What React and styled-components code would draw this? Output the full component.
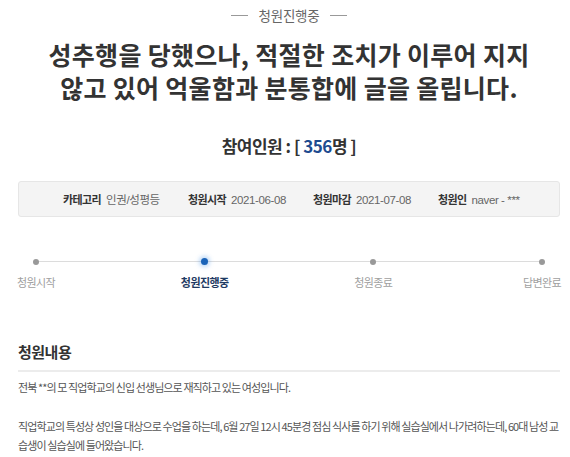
import React from "react";
import styled, { createGlobalStyle } from "styled-components";

const Global = createGlobalStyle`
  html, body { margin: 0; padding: 0; background: #fff; }
  body { font-family: "Noto Sans CJK KR", "Noto Sans", sans-serif; color: #333; }
`;

const Page = styled.div`
  width: 542px;
  padding: 7px 10px 0 18px;
`;

const Status = styled.div`
  display: flex;
  align-items: center;
  justify-content: center;
  gap: 10px;
  font-size: 13.5px;
  line-height: 16px;
  color: #666;
  letter-spacing: -0.2px;
  &::before, &::after {
    content: "";
    width: 17px;
    height: 1px;
    background: #999;
  }
`;

const Title = styled.h1`
  margin: 15px 0 0;
  text-align: center;
  font-size: 25px;
  line-height: 33px;
  font-weight: 700;
  color: #333;
  letter-spacing: 0.3px;
`;

const Count = styled.div`
  margin-top: 31px;
  text-align: center;
  font-size: 17px;
  line-height: 22px;
  font-weight: 700;
  color: #333;
  letter-spacing: -0.5px;
`;

const Num = styled.span`
  color: #1d4b8f;
`;

const InfoBox = styled.div`
  margin-top: 24px;
  height: 34px;
  background: #f4f4f4;
  border: 1px solid #e6e6e6;
  border-radius: 3px;
  display: grid;
  grid-template-columns: repeat(4, 125px);
  align-items: center;
  padding-left: 44px;
  font-size: 11px;
  letter-spacing: -0.6px;
`;

const InfoItem = styled.div`
  display: flex;
  align-items: baseline;
  gap: 5px;
  white-space: nowrap;
`;

const InfoLabel = styled.span`
  font-weight: 700;
  color: #333;
`;

const InfoValue = styled.span`
  color: #666;
  font-family: "Liberation Sans", "Noto Sans CJK KR", sans-serif;
  font-size: 11.5px;
  letter-spacing: -0.4px;
`;

const Progress = styled.div`
  margin-top: 41px;
  position: relative;
  display: flex;
  justify-content: space-between;
  &::before {
    content: "";
    position: absolute;
    left: 18px;
    right: 18px;
    top: 3px;
    height: 1px;
    background: #dcdcdc;
  }
`;

const Step = styled.div`
  width: 36px;
  display: flex;
  flex-direction: column;
  align-items: center;
  position: relative;
`;

const Dot = styled.span`
  width: ${p => (p.$active ? 7 : 6)}px;
  height: ${p => (p.$active ? 7 : 6)}px;
  margin-top: ${p => (p.$active ? 0 : 1)}px;
  border-radius: 50%;
  background: ${p => (p.$active ? "#1a63b8" : "#999")};
  box-shadow: ${p => (p.$active ? "0 0 4px 2px rgba(60,140,230,0.35)" : "none")};
`;

const StepLabel = styled.span`
  margin-top: 9px;
  font-size: 11px;
  line-height: 16px;
  white-space: nowrap;
  letter-spacing: -0.6px;
  color: ${p => (p.$active ? "#1f3b63" : "#a0a0a0")};
  font-weight: ${p => (p.$active ? 700 : 400)};
`;

const Section = styled.h2`
  margin: 52px 0 0;
  padding-bottom: 8px;
  border-bottom: 2px solid #ececec;
  font-size: 15px;
  line-height: 20px;
  font-weight: 700;
  color: #333;
  letter-spacing: -0.5px;
`;

const Body = styled.div`
  padding-top: 6px;
  font-size: 11px;
  line-height: 19px;
  color: #555;
  letter-spacing: -0.9px;
`;

const Para = styled.p`
  margin: 0 0 20px;
`;

const steps = ["청원시작", "청원진행중", "청원종료", "답변완료"];

export default function App() {
  return (
    <>
      <Global />
      <Page>
        <Status>청원진행중</Status>
        <Title>
          성추행을 당했으나, 적절한 조치가 이루어 지지
          <br />
          않고 있어 억울함과 분통합에 글을 올립니다.
        </Title>
        <Count>
          참여인원 : [ <Num>356</Num>명 ]
        </Count>
        <InfoBox>
          <InfoItem>
            <InfoLabel>카테고리</InfoLabel>
            <InfoValue>인권/성평등</InfoValue>
          </InfoItem>
          <InfoItem>
            <InfoLabel>청원시작</InfoLabel>
            <InfoValue>2021-06-08</InfoValue>
          </InfoItem>
          <InfoItem>
            <InfoLabel>청원마감</InfoLabel>
            <InfoValue>2021-07-08</InfoValue>
          </InfoItem>
          <InfoItem>
            <InfoLabel>청원인</InfoLabel>
            <InfoValue>naver - ***</InfoValue>
          </InfoItem>
        </InfoBox>
        <Progress>
          {steps.map((s, i) => (
            <Step key={s}>
              <Dot $active={i === 1} />
              <StepLabel $active={i === 1}>{s}</StepLabel>
            </Step>
          ))}
        </Progress>
        <Section>청원내용</Section>
        <Body>
          <Para>전북 **의 모 직업학교의 신입 선생님으로 재직하고 있는 여성입니다.</Para>
          <Para>
            직업학교의 특성상 성인을 대상으로 수업을 하는데, 6월 27일 12시 45분경 점심 식사를 하기 위해 실습실에서 나가려하는데, 60대 남성 교습생이 실습실에 들어왔습니다.
          </Para>
        </Body>
      </Page>
    </>
  );
}
